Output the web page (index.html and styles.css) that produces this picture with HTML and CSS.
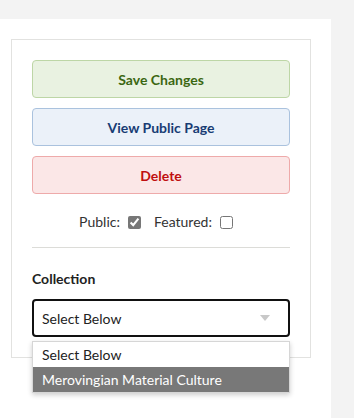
FILE: index.html
```html
<!DOCTYPE html>
<html lang="en">
<head>
    <meta charset="UTF-8">
    <meta name="viewport" content="width=device-width, initial-scale=1.0">
    <title>Edit Item</title>
    <link rel="stylesheet" href="styles.css">
</head>
<body>

<div class="page">
    <div class="sidebar">
        <div class="actions">
            <button class="btn btn-save" type="button">Save Changes</button>
            <button class="btn btn-view" type="button">View Public Page</button>
            <button class="btn btn-delete" type="button">Delete</button>

            <div class="flags">
                <label>Public: <input type="checkbox" checked></label>
                <label>Featured: <input type="checkbox"></label>
            </div>

            <hr>

            <div class="field-label">Collection</div>
            <div class="select-wrap">
                <div class="select-box">
                    <span>Select Below</span>
                    <span class="arrow"></span>
                </div>
                <!-- open dropdown list -->
                <ul class="options">
                    <li>Select Below</li>
                    <li class="active">Merovingian Material Culture</li>
                </ul>
            </div>
        </div>
    </div>
</div>

</body>
</html>
```

FILE: styles.css
```css
body {
    font-family: Lato, 'Open Sans', sans-serif;
    margin: 0;
    padding: 0;
    background-color: #f3f3f3;
    color: #222;
    font-size: 14px;
}
.page {
    margin-top: 19px;
    width: 331px;
    height: 399px;
    background: white;
    padding-top: 20px;
    box-sizing: border-box;
}
.actions {
    margin-left: 11px;
    width: 300px;
    box-sizing: border-box;
    border: 1px solid #e2e2e0;
    padding: 20px;
    display: flex;
    flex-direction: column;
}
.btn {
    height: 38px;
    margin-bottom: 10px;
    font-family: Lato, sans-serif;
    font-size: 14px;
    font-weight: bold;
    border-radius: 4px;
    border: 1px solid;
    cursor: pointer;
}
.btn-save {
    background-color: #e9f2e1;
    border-color: #bdd6a6;
    color: #3b6712;
}
.btn-view {
    background-color: #ebf1f9;
    border-color: #aac2de;
    color: #183c74;
}
.btn-delete {
    background-color: #fbe7e7;
    border-color: #eeaaaa;
    color: #c00f0f;
    margin-bottom: 0;
}
.flags {
    display: flex;
    justify-content: center;
    gap: 13px;
    margin-top: 18px;
    padding-right: 10px;
    line-height: 20px;
    color: #333;
}
.flags label {
    display: flex;
    align-items: center;
    gap: 8px;
}
.flags input {
    margin: 0;
    width: 13px;
    height: 13px;
    accent-color: #777;
}
hr {
    width: 100%;
    border: none;
    border-top: 1px solid #dcdcd8;
    margin: 15px 0 0;
}
.field-label {
    font-weight: bold;
    margin-top: 21px;
    line-height: 20px;
}
.select-wrap {
    position: relative;
    margin-top: 10px;
}
.select-box {
    height: 38px;
    box-sizing: border-box;
    border: 2px solid #111;
    border-radius: 4px;
    padding: 0 18px 0 8px;
    display: flex;
    align-items: center;
    justify-content: space-between;
}
.arrow {
    width: 0;
    height: 0;
    border-left: 5px solid transparent;
    border-right: 5px solid transparent;
    border-top: 6px solid #c8c8c8;
}
.options {
    position: absolute;
    top: 42px;
    left: 0;
    right: 0;
    margin: 0;
    padding: 0;
    list-style: none;
    background: white;
    border: 1px solid #d6d6d6;
    box-shadow: 0 2px 5px rgba(0, 0, 0, 0.2);
}
.options li {
    height: 25px;
    line-height: 25px;
    padding-left: 9px;
}
.options li.active {
    background-color: #787878;
    color: white;
}
```
